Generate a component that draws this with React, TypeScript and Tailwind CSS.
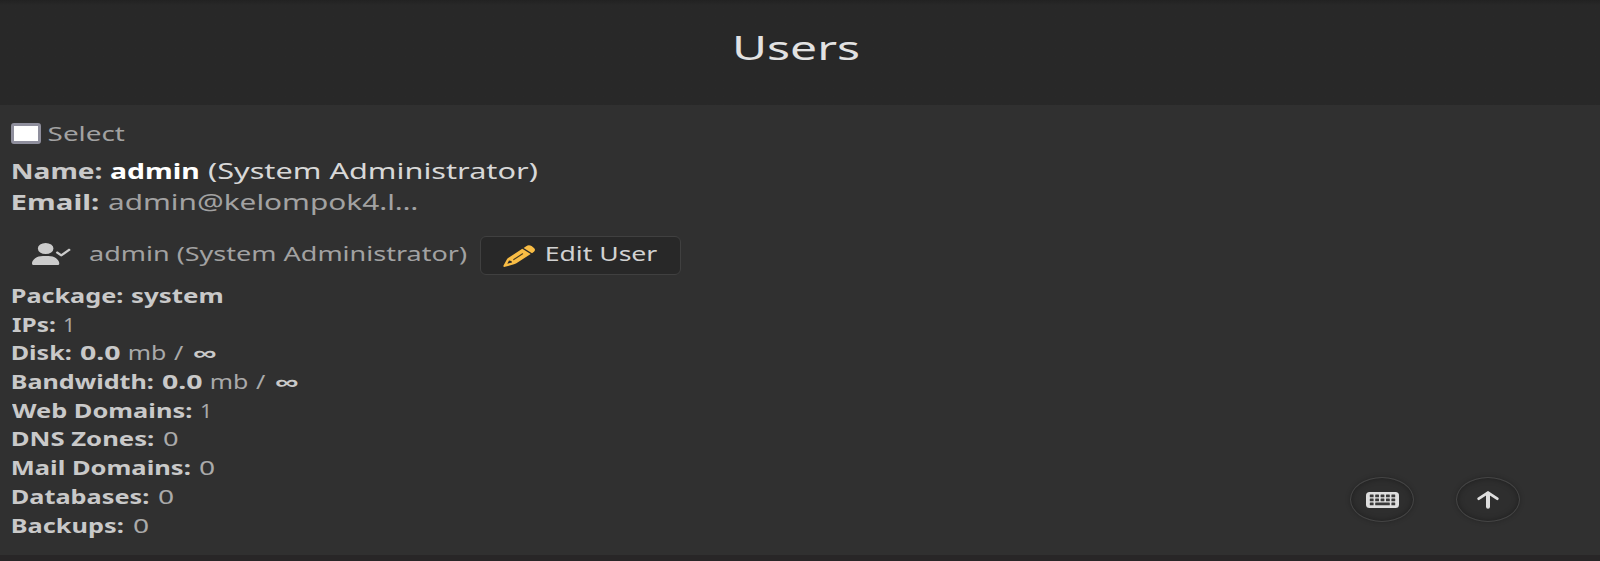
import { useLayoutEffect, useRef } from "react";
import { FaUserCheck } from "react-icons/fa6";

type RunProps = { text: string; width: number; gap?: number; className?: string };

/** A piece of expanded text whose visible glyphs span exactly `width` pixels. */
function Run({ text, width, gap = 0, className = "" }: RunProps) {
  const ref = useRef<HTMLSpanElement>(null);
  useLayoutEffect(() => {
    const el = ref.current;
    const ctx = document.createElement("canvas").getContext("2d");
    if (!el || !ctx) return;
    const s = getComputedStyle(el);
    ctx.font = `${s.fontWeight} ${s.fontSize} ${s.fontFamily}`;
    const m = ctx.measureText(text);
    const k = width / (m.actualBoundingBoxRight + m.actualBoundingBoxLeft);
    el.style.transform = `translateX(${m.actualBoundingBoxLeft * k}px) scaleX(${k})`;
  }, [text, width]);
  return (
    <span className="block shrink-0 text-left whitespace-nowrap" style={{ width, marginLeft: gap }}>
      <span ref={ref} className={`inline-block origin-left ${className}`}>
        {text}
      </span>
    </span>
  );
}

function PencilIcon() {
  return (
    <svg viewBox="0 0 32 22" className="h-[22px] w-8 shrink-0 text-[#f9bd45]" fill="currentColor">
      <path d="M23.2 1.2Q25.8-.5 28.6 1.1L31 3Q33 4.8 31 6.8L29 8.2L20.6 2.9Z" />
      <path
        fillRule="evenodd"
        d="M19.3 3.7L27.7 9L13.4 18.2Q12.4 18.9 11 19.3L2 21.8Q0 22.2.5 20.6L3.8 14.6Q4.3 13.6 5.5 12.8ZM6 15.6L4.3 18.8L9 17.6L8.4 16Z"
      />
      <path d="M10.8 14.6L19.6 8.8" stroke="#4a3c20" strokeWidth="1.2" strokeLinecap="round" />
    </svg>
  );
}

function KeyboardIcon() {
  const columns = [3.8, 9.2, 14.6, 20, 25.4];
  return (
    <svg viewBox="0 0 33 16" className="h-4 w-[33px] shrink-0">
      <rect width="33" height="16" rx="3.5" fill="#dedede" />
      <g fill="#3a3a3a">
        {[2.6, 6.6].map((y) => columns.map((x) => <rect key={`${x}-${y}`} x={x} y={y} width="3.8" height="2.6" rx=".5" />))}
        <rect x="3.8" y="10.6" width="3.8" height="2.6" rx=".5" />
        <rect x="9.2" y="10.6" width="14.6" height="2.6" rx=".5" />
        <rect x="25.4" y="10.6" width="3.8" height="2.6" rx=".5" />
      </g>
    </svg>
  );
}

function ArrowUpIcon() {
  return (
    <svg viewBox="0 0 22 18" className="h-[18px] w-[22px] shrink-0" fill="none" stroke="#dedede" strokeLinecap="round" strokeLinejoin="round">
      <path d="M1.8 7.6L11 1.6L20.2 7.6" strokeWidth="2.9" />
      <path d="M11 2.6V15.8" strokeWidth="4" />
    </svg>
  );
}

const label = "font-bold text-[#c9c9c9]";
const value = "font-normal text-[#aaaaaa]";

const stats: RunProps[][] = [
  [
    { text: "Package:", width: 110.5, className: label },
    { text: "system", width: 92, gap: 8, className: label },
  ],
  [
    { text: "IPs:", width: 43, className: label },
    { text: "1", width: 7.5, gap: 9, className: value },
  ],
  [
    { text: "Disk:", width: 59, className: label },
    { text: "0.0", width: 40, gap: 8.5, className: label },
    { text: "mb", width: 37, gap: 9.5, className: value },
    { text: "/", width: 10, gap: 8, className: value },
    { text: "∞", width: 23, gap: 9, className: label },
  ],
  [
    { text: "Bandwidth:", width: 141, className: label },
    { text: "0.0", width: 40, gap: 8.5, className: label },
    { text: "mb", width: 37, gap: 9.5, className: value },
    { text: "/", width: 10, gap: 8, className: value },
    { text: "∞", width: 23, gap: 9, className: label },
  ],
  [
    { text: "Web Domains:", width: 179.5, className: label },
    { text: "1", width: 7.5, gap: 9, className: value },
  ],
  [
    { text: "DNS Zones:", width: 141.5, className: label },
    { text: "0", width: 15, gap: 9.5, className: value },
  ],
  [
    { text: "Mail Domains:", width: 178, className: label },
    { text: "0", width: 15.5, gap: 8.5, className: value },
  ],
  [
    { text: "Databases:", width: 136.5, className: label },
    { text: "0", width: 15.5, gap: 9.5, className: value },
  ],
  [
    { text: "Backups:", width: 111, className: label },
    { text: "0", width: 15.5, gap: 9.5, className: value },
  ],
];

const roundButton =
  "flex h-[45px] w-16 items-center justify-center rounded-[50%] border border-[#454545] bg-[#2e2e2e] shadow-[0_0_5px_rgba(0,0,0,0.25),inset_0_0_6px_rgba(0,0,0,0.35)]";

export default function App() {
  return (
    <div className="relative flex h-[561px] w-full flex-col overflow-hidden bg-[#303030] font-['Noto_Sans',sans-serif]">
      <header className="flex h-[105px] shrink-0 justify-center bg-linear-to-b from-[#222222] via-[#282828] via-5% to-[#282828] pt-[23px]">
        <h1 className="mr-[7px] flex text-[32px] leading-[50px]">
          <Run text="Users" width={123} className="text-[#e2e2e2]" />
        </h1>
      </header>

      <main className="flex flex-1 flex-col pl-3 text-[20px]">
        <label className="mt-[14px] flex h-7 items-center leading-7">
          <input
            type="checkbox"
            className="-ml-px h-[21px] w-[30px] appearance-none rounded-[3px] border-[3px] border-[#8f8f9d] bg-white"
          />
          <Run text="Select" width={75.5} gap={7.5} className="pt-px text-[#a2a2a2]" />
        </label>

        <div className="mt-[7px] flex h-8 text-[22px] leading-8">
          <Run text="Name:" width={89} className={label} />
          <Run text="admin" width={88} gap={9} className="font-bold text-white" />
          <Run text="(System Administrator)" width={329} gap={10} className="text-[#d8d8d8]" />
        </div>
        <div className="flex h-8 text-[21px] leading-[33px]">
          <Run text="Email:" width={86} className={label} />
          <Run text="admin@kelompok4.l…" width={309.5} gap={10} className="text-[#a2a2a2]" />
        </div>

        <div className="mt-[18px] flex h-[39px] items-center pl-5 leading-[26px]">
          <FaUserCheck preserveAspectRatio="none" className="mb-[4px] h-[22px] w-[39px] text-[#cccccc]" />
          <Run text="admin (System Administrator)" width={378} gap={18} className="mb-[3px] text-[#a2a2a2]" />
          <button className="ml-[13px] flex h-[39px] w-[201px] items-center rounded-md border border-[#404040] bg-[#282828] pl-[22px]">
            <PencilIcon />
            <Run text="Edit User" width={111} gap={11} className="mb-[3px] text-[#d2d2d2]" />
          </button>
        </div>

        <div className="mt-[7px]">
          {stats.map((row) => (
            <div key={row[0].text} className="flex h-[28.7px] leading-7">
              {row.map((run, i) => (
                <Run key={i} {...run} />
              ))}
            </div>
          ))}
        </div>
      </main>

      <footer className="h-[6px] shrink-0 bg-[#282627]" />

      <div className="absolute right-20 bottom-[39px] flex gap-[42px]">
        <button aria-label="Keyboard shortcuts" className={roundButton}>
          <KeyboardIcon />
        </button>
        <button aria-label="Top" className={roundButton}>
          <ArrowUpIcon />
        </button>
      </div>
    </div>
  );
}
